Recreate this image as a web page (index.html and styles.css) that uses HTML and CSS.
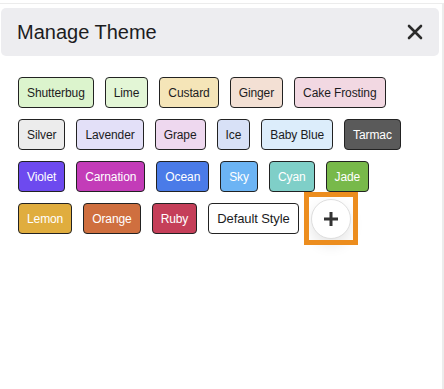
FILE: index.html
```html
<!DOCTYPE html>
<html lang="en">
<head>
    <meta charset="UTF-8">
    <meta name="viewport" content="width=device-width, initial-scale=1.0">
    <title>Manage Theme</title>
    <link rel="stylesheet" href="styles.css">
</head>
<body>
    <div class="panel">
        <div class="panel-header">
            <h1>Manage Theme</h1>
            <button class="close-btn" title="Close">
                <svg width="16" height="16" viewBox="0 0 16 16">
                    <path d="M2 2 L14 14 M14 2 L2 14" stroke="#2b2b2b" stroke-width="2.6" stroke-linecap="round"/>
                </svg>
            </button>
        </div>

        <div class="themes">
            <button class="theme t-shutterbug">Shutterbug</button>
            <button class="theme t-lime">Lime</button>
            <button class="theme t-custard">Custard</button>
            <button class="theme t-ginger">Ginger</button>
            <button class="theme t-cake">Cake Frosting</button>

            <button class="theme t-silver">Silver</button>
            <button class="theme t-lavender">Lavender</button>
            <button class="theme t-grape">Grape</button>
            <button class="theme t-ice">Ice</button>
            <button class="theme t-babyblue">Baby Blue</button>
            <button class="theme dark t-tarmac">Tarmac</button>

            <button class="theme dark t-violet">Violet</button>
            <button class="theme dark t-carnation">Carnation</button>
            <button class="theme dark t-ocean">Ocean</button>
            <button class="theme dark t-sky">Sky</button>
            <button class="theme dark t-cyan">Cyan</button>
            <button class="theme dark t-jade">Jade</button>

            <button class="theme dark t-lemon">Lemon</button>
            <button class="theme dark t-orange">Orange</button>
            <button class="theme dark t-ruby">Ruby</button>
            <button class="theme default-style">Default Style</button>

            <div class="add-wrap">
                <button class="add-btn" title="Add theme">
                    <svg width="16" height="16" viewBox="0 0 16 16">
                        <path d="M8 1 V15 M1 8 H15" stroke="#333" stroke-width="3"/>
                    </svg>
                </button>
                <div class="highlight"></div>
            </div>
        </div>
    </div>
</body>
</html>
```

FILE: styles.css
```css
* {
    margin: 0;
    padding: 0;
    box-sizing: border-box;
}

body {
    font-family: 'Liberation Sans', Arial, sans-serif;
    background: #ffffff;
    color: #1c1c1e;
    width: 444px;
    height: 389px;
    overflow: hidden;
}

.panel {
    margin-top: 3px;
    height: 386px;
    border-top: 1px solid #ececec;
    border-right: 2px solid #ececec;
}

.panel-header {
    margin: 4px 3px 0 1px;
    height: 48px;
    background: #ededf0;
    border-radius: 5px;
    display: flex;
    align-items: center;
    justify-content: space-between;
    padding: 0 15px 0 16px;
}

h1 {
    font-size: 20px;
    font-weight: 400;
    color: #1c1c1e;
}

.close-btn {
    background: none;
    border: none;
    width: 18px;
    height: 18px;
    display: flex;
    align-items: center;
    justify-content: center;
    cursor: pointer;
}

.themes {
    display: flex;
    flex-wrap: wrap;
    align-items: center;
    gap: 11px 11px;
    padding: 21px 22px 0 18px;
}

.theme {
    height: 31px;
    padding: 0 8px;
    border: 1px solid #222;
    border-radius: 4px;
    font-family: inherit;
    font-size: 12px;
    letter-spacing: -0.1px;
    color: #1c1c1e;
    cursor: pointer;
}

.theme.dark {
    color: #ffffff;
}

.t-shutterbug { background: #dcf4cd; }
.t-lime { background: #e3f6d6; }
.t-custard { background: #f5e5b8; }
.t-ginger { background: #f3e0d4; }
.t-cake { background: #f2d8e2; }
.t-silver { background: #ececec; }
.t-lavender { background: #e3e0f8; }
.t-grape { background: #eed8ef; }
.t-ice { background: #d8e1f7; }
.t-babyblue { background: #dcedfb; }
.t-tarmac { background: #5a5a5a; }
.t-violet { background: #6d4aef; }
.t-carnation { background: #c33cb8; }
.t-ocean { background: #4a7be8; }
.t-sky { background: #6cb4f4; }
.t-cyan { background: #7fcfc8; }
.t-jade { background: #78b94a; }
.t-lemon { background: #e0ad3e; }
.t-orange { background: #cf6f3f; }
.t-ruby { background: #c53f59; }

.default-style {
    background: #ffffff;
    font-size: 13px;
}

.add-wrap {
    position: relative;
    width: 40px;
    height: 31px;
    margin-left: 1px;
}

.add-btn {
    width: 40px;
    height: 40px;
    margin-top: -4px;
    border-radius: 50%;
    background: #ffffff;
    border: 1px solid #dedede;
    box-shadow: 0 6px 14px rgba(0, 0, 0, 0.10);
    display: flex;
    align-items: center;
    justify-content: center;
    cursor: pointer;
}

.highlight {
    position: absolute;
    top: -11px;
    left: -7px;
    width: 54px;
    height: 53px;
    border: 5px solid #ec8d1e;
    pointer-events: none;
}
```
